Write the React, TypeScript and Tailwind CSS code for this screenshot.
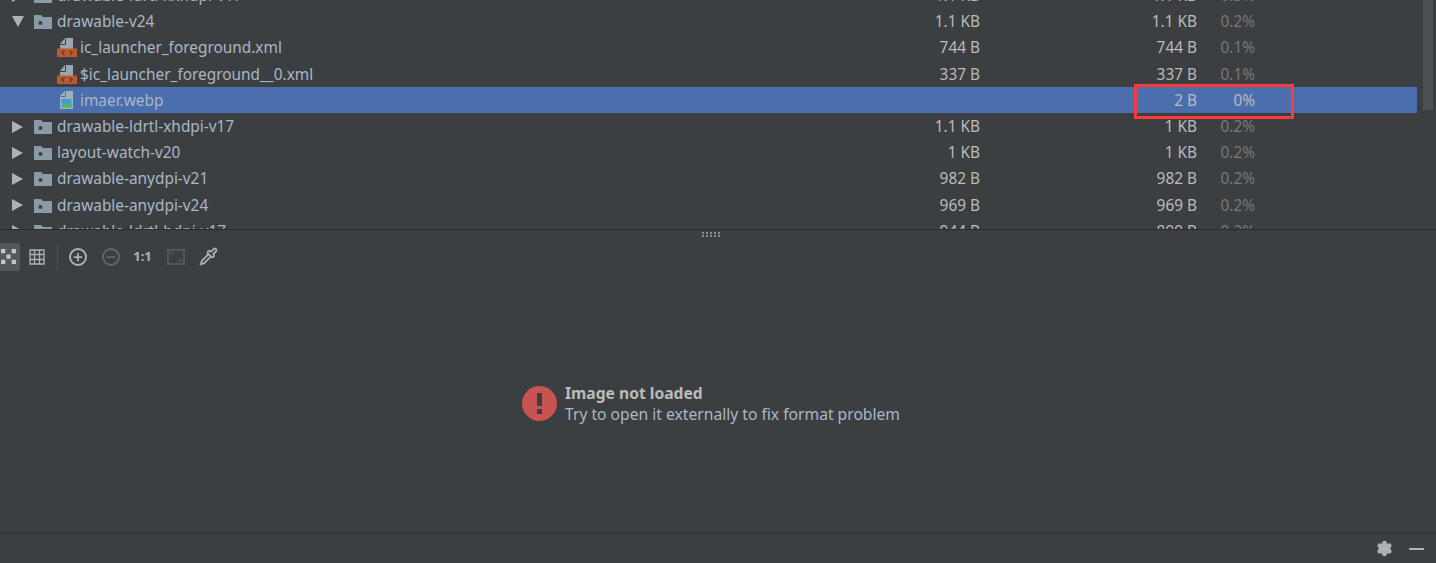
import { Settings, Plus, Minus, Pipette } from "lucide-react"

type Row = {
  name: string
  raw: string
  size: string
  pct: string
  kind: "dir" | "xml" | "img"
  open?: boolean
  selected?: boolean
}

const rows: Row[] = [
  { name: "drawable-ldrtl-xxhdpi-v17", raw: "1.1 KB", size: "1.1 KB", pct: "0.3%", kind: "dir" },
  { name: "drawable-v24", raw: "1.1 KB", size: "1.1 KB", pct: "0.2%", kind: "dir", open: true },
  { name: "ic_launcher_foreground.xml", raw: "744 B", size: "744 B", pct: "0.1%", kind: "xml" },
  { name: "$ic_launcher_foreground__0.xml", raw: "337 B", size: "337 B", pct: "0.1%", kind: "xml" },
  { name: "imaer.webp", raw: "", size: "2 B", pct: "0%", kind: "img", selected: true },
  { name: "drawable-ldrtl-xhdpi-v17", raw: "1.1 KB", size: "1 KB", pct: "0.2%", kind: "dir" },
  { name: "layout-watch-v20", raw: "1 KB", size: "1 KB", pct: "0.2%", kind: "dir" },
  { name: "drawable-anydpi-v21", raw: "982 B", size: "982 B", pct: "0.2%", kind: "dir" },
  { name: "drawable-anydpi-v24", raw: "969 B", size: "969 B", pct: "0.2%", kind: "dir" },
  { name: "drawable-ldrtl-hdpi-v17", raw: "944 B", size: "899 B", pct: "0.2%", kind: "dir" },
]

function FolderIcon() {
  return (
    <svg width="18" height="15" viewBox="0 0 18 15" className="shrink-0">
      <path d="M0 1h7l2 2h9v12H0z" fill="#8a9ba6" />
      <circle cx="6.5" cy="9" r="2" fill="#3c3f41" />
    </svg>
  )
}

function XmlIcon() {
  return (
    <svg width="20" height="19" viewBox="0 0 20 19" className="shrink-0">
      <path d="M3 6l5-6h8v11H3z" fill="#9aa7b0" />
      <path d="M3 6.5h5.5V0.5" fill="none" stroke="#3c3f41" strokeWidth="1" />
      <rect x="0" y="10.5" width="20" height="8.5" fill="#bd5a2b" />
      <path d="M7.5 12.5l-2.7 2.3 2.7 2.3M12.5 12.5l2.7 2.3-2.7 2.3" fill="none" stroke="#3c3f41" strokeWidth="1.1" />
    </svg>
  )
}

function ImageFileIcon() {
  return (
    <svg width="13" height="18" viewBox="0 0 13 18" className="shrink-0">
      <path d="M0 5l5-5h8v18H0z" fill="#9fb1bd" />
      <path d="M0.5 5.5h5V0.5" fill="none" stroke="#4b6eaf" strokeWidth="1" />
      <rect x="1.5" y="8" width="10" height="8.5" fill="#40a0c8" />
      <path d="M1.5 16.5l3.5-4.5 3 2.5 1.5-1 2 3z" fill="#62b543" />
    </svg>
  )
}

function TreeRow({ row }: { row: Row }) {
  const indent = row.kind !== "dir"
  return (
    <div className={`flex h-[26.2px] pt-px items-center shrink-0 text-[15.4px] ${row.selected ? "bg-[#4b6eaf]" : ""}`}>
      <div className={`flex items-center w-[800px] ${indent ? "pl-[57px]" : "pl-[12px]"}`}>
        {row.kind === "dir" && (
          <>
            <span
              className={`w-0 h-0 shrink-0 ${
                row.open
                  ? "border-x-[6px] border-x-transparent border-t-[11px] border-t-[#afb1b3] mr-[-1px]"
                  : "border-y-[6px] border-y-transparent border-l-[11px] border-l-[#afb1b3]"
              }`}
            />
            <span className="w-[11px] shrink-0" />
            <FolderIcon />
            <span className="ml-[5px] text-[#a9b7c6]">{row.name}</span>
          </>
        )}
        {row.kind === "xml" && (
          <>
            <XmlIcon />
            <span className="ml-[3px] text-[#a9b7c6]">{row.name}</span>
          </>
        )}
        {row.kind === "img" && (
          <>
            <span className="w-[3px] shrink-0" />
            <ImageFileIcon />
            <span className="ml-[7px] text-[#a9b7c6]">{row.name}</span>
          </>
        )}
      </div>
      <div className="w-[180px] text-right text-[#bbbbbb]">{row.raw}</div>
      <div className="w-[217px] text-right text-[#bbbbbb]">{row.size}</div>
      <div className={`w-[58px] text-right ${row.selected ? "text-[#bbbbbb]" : "text-[#787878]"}`}>{row.pct}</div>
    </div>
  )
}

function ToolButton({ children, active }: { children: React.ReactNode; active?: boolean }) {
  return (
    <div className={`flex items-center justify-center w-[24px] h-[28px] rounded-[3px] ${active ? "bg-[#55585a]" : ""}`}>
      {children}
    </div>
  )
}

export default function App() {
  return (
    <div className="relative w-[1436px] h-[563px] overflow-hidden bg-[#3c3f41] flex flex-col text-[15px] font-['Noto_Sans','Open_Sans',sans-serif]">
      {/* File tree */}
      <div className="h-[229px] shrink-0 overflow-hidden relative">
        <div className="w-[1417px] flex flex-col -mt-[18px]">
          {rows.map((row) => (
            <TreeRow key={row.name} row={row} />
          ))}
        </div>
        <div className="absolute left-[1423px] top-0 w-[10px] h-[110px] bg-[#4e5153]" />
      </div>

      {/* Splitter */}
      <div className="h-px shrink-0 bg-[#2b2b2b] relative">
        <div className="absolute left-[702px] top-[3px] grid grid-cols-5 gap-x-[2px] gap-y-[1px]">
          {Array.from({ length: 10 }).map((_, i) => (
            <span key={i} className="w-[2px] h-[2px] bg-[#8a8c8e]" />
          ))}
        </div>
      </div>

      {/* Image toolbar */}
      <div className="h-[54px] shrink-0 flex items-center -ml-[4px] pb-[1px]">
        <ToolButton active>
          <svg width="17" height="17" viewBox="0 0 16 16">
            <path d="M1 1h4v4H1zM11 1h4v4h-4zM6 6h4v4H6zM1 11h4v4H1zM11 11h4v4h-4z" fill="#c4c6c8" />
          </svg>
        </ToolButton>
        <div className="ml-[5px]">
          <ToolButton>
            <svg width="16" height="16" viewBox="0 0 16 16" fill="none" stroke="#afb1b3" strokeWidth="1.3">
              <path d="M1 1h14v14H1zM1 5.5h14M1 10.5h14M5.5 1v14M10.5 1v14" />
            </svg>
          </ToolButton>
        </div>
        <span className="w-px h-[26px] bg-[#505254] ml-[8px]" />
        <div className="flex items-center gap-[9px] ml-[8px]">
          <ToolButton>
            <span className="flex items-center justify-center w-[18px] h-[18px] rounded-full border-2 border-[#afb1b3]">
              <Plus size={12} strokeWidth={3.5} color="#afb1b3" />
            </span>
          </ToolButton>
          <ToolButton>
            <span className="flex items-center justify-center w-[18px] h-[18px] rounded-full border-2 border-[#636567]">
              <Minus size={12} strokeWidth={3.5} color="#636567" />
            </span>
          </ToolButton>
          <ToolButton>
            <span className="text-[13px] font-bold text-[#afb1b3] -ml-[3px]">1:1</span>
          </ToolButton>
          <ToolButton>
            <svg width="18" height="16" viewBox="0 0 18 16" fill="none" stroke="#5c5e60" strokeWidth="1.5" className="-ml-[2px]">
              <rect x="1" y="1" width="16" height="14" />
              <path d="M4 6V4h3M14 10v2h-3" stroke="#505254" />
            </svg>
          </ToolButton>
          <ToolButton>
            <Pipette size={19} color="#afb1b3" strokeWidth={2.2} className="-ml-[4px]" />
          </ToolButton>
        </div>
      </div>

      {/* Image preview */}
      <div className="flex-1 flex items-center justify-center gap-[8px] pb-[10px] pr-[14px]">
        <svg width="35" height="35" viewBox="0 0 35 35" className="shrink-0">
          <circle cx="17.5" cy="17.5" r="17.5" fill="#c75450" />
          <rect x="15" y="7" width="5" height="13" fill="#3c3f41" />
          <rect x="15" y="23" width="5" height="5" fill="#3c3f41" />
        </svg>
        <div className="leading-[21px] text-[15.65px]">
          <div className="font-bold text-[#bbbbbb]">Image not loaded</div>
          <div className="text-[#a9b7c6]">Try to open it externally to fix format problem</div>
        </div>
      </div>

      {/* Status bar */}
      <div className="h-[30px] shrink-0 border-t border-[#323232] flex items-center justify-end gap-[16px] pr-[12px]">
        <Settings size={17} color="#afb1b3" fill="#afb1b3" />
        <span className="w-[15px] h-[2px] bg-[#afb1b3]" />
      </div>

      {/* Highlight box */}
      <div className="absolute left-[1134px] top-[84px] w-[160px] h-[35px] border-[3px] border-[#fb3b3b]" />
    </div>
  )
}
